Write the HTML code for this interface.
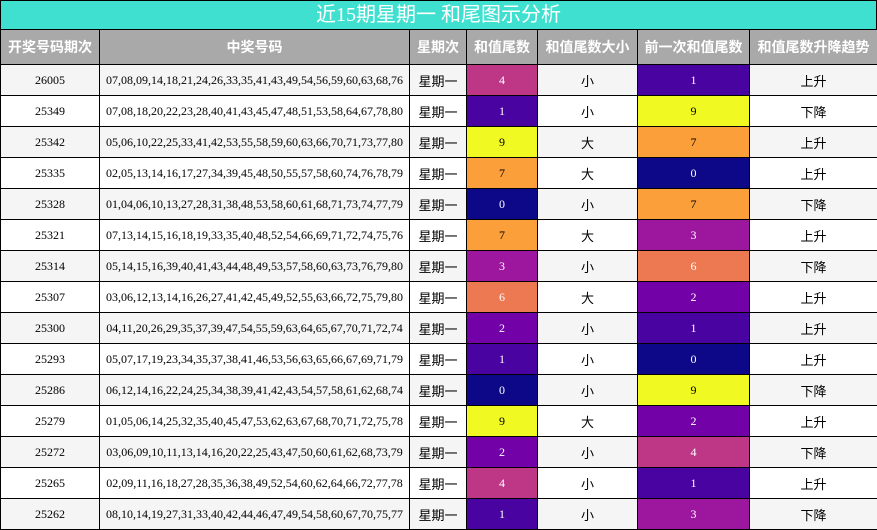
<!DOCTYPE html>
<html><head><meta charset="utf-8"><style>
*{margin:0;padding:0;box-sizing:border-box}
body{width:877px;height:530px;background:#fff;overflow:hidden;font-family:"Liberation Serif","Noto Sans CJK SC",serif}
.title{height:29px;background:#40e0d0;border:1px solid #000;border-bottom:none;color:#fff;text-align:center;font:20px/28px "Liberation Serif","Noto Sans CJK SC",sans-serif}
table{border-collapse:collapse;table-layout:fixed;width:877px}
td,th{border:1px solid #000;text-align:center;font-size:12px;color:#000;height:31px;padding:0;white-space:nowrap;overflow:hidden}
th{background:#a9a9a9;color:#fff;font:bold 14px "Liberation Sans","Noto Sans CJK SC",sans-serif;height:35px}
#b tr:nth-child(odd) td{background:#f5f5f5}
.c{font-family:"Liberation Sans","Noto Sans CJK SC",sans-serif;font-size:13px}
.w{color:#fff}
</style></head><body>
<div class="title">近15期星期一 和尾图示分析</div>
<table>
<colgroup><col style="width:99px"><col style="width:310px"><col style="width:57px"><col style="width:71px"><col style="width:100px"><col style="width:112px"><col style="width:128px"></colgroup>
<thead><tr><th>开奖号码期次</th><th>中奖号码</th><th>星期次</th><th>和值尾数</th><th>和值尾数大小</th><th>前一次和值尾数</th><th>和值尾数升降趋势</th></tr></thead>
<tbody id="b"></tbody>
</table>
<script>
var d=[["26005","07,08,09,14,18,21,24,26,33,35,41,43,49,54,56,59,60,63,68,76",4,"小",1,"上升"],
["25349","07,08,18,20,22,23,28,40,41,43,45,47,48,51,53,58,64,67,78,80",1,"小",9,"下降"],
["25342","05,06,10,22,25,33,41,42,53,55,58,59,60,63,66,70,71,73,77,80",9,"大",7,"上升"],
["25335","02,05,13,14,16,17,27,34,39,45,48,50,55,57,58,60,74,76,78,79",7,"大",0,"上升"],
["25328","01,04,06,10,13,27,28,31,38,48,53,58,60,61,68,71,73,74,77,79",0,"小",7,"下降"],
["25321","07,13,14,15,16,18,19,33,35,40,48,52,54,66,69,71,72,74,75,76",7,"大",3,"上升"],
["25314","05,14,15,16,39,40,41,43,44,48,49,53,57,58,60,63,73,76,79,80",3,"小",6,"下降"],
["25307","03,06,12,13,14,16,26,27,41,42,45,49,52,55,63,66,72,75,79,80",6,"大",2,"上升"],
["25300","04,11,20,26,29,35,37,39,47,54,55,59,63,64,65,67,70,71,72,74",2,"小",1,"上升"],
["25293","05,07,17,19,23,34,35,37,38,41,46,53,56,63,65,66,67,69,71,79",1,"小",0,"上升"],
["25286","06,12,14,16,22,24,25,34,38,39,41,42,43,54,57,58,61,62,68,74",0,"小",9,"下降"],
["25279","01,05,06,14,25,32,35,40,45,47,53,62,63,67,68,70,71,72,75,78",9,"大",2,"上升"],
["25272","03,06,09,10,11,13,14,16,20,22,25,43,47,50,60,61,62,68,73,79",2,"小",4,"下降"],
["25265","02,09,11,16,18,27,28,35,36,38,49,52,54,60,62,64,66,72,77,78",4,"小",1,"上升"],
["25262","08,10,14,19,27,31,33,40,42,44,46,47,49,54,58,60,67,70,75,77",1,"小",3,"下降"]];
var col={0:"#0d0887",1:"#4903a0",2:"#7201a8",3:"#9c179e",4:"#bd3786",5:"#d8576b",6:"#ed7953",7:"#fb9f3a",8:"#fdca26",9:"#f0f921"};
function cell(v){var w=v<=6?' w':'';return '<td class="'+w+'" style="background:'+col[v]+'!important">'+v+'</td>';}
var h="";d.forEach(function(r){h+='<tr><td>'+r[0]+'</td><td>'+r[1]+'</td><td class="c">星期一</td>'+cell(r[2])+'<td class="c">'+r[3]+'</td>'+cell(r[4])+'<td class="c">'+r[5]+'</td></tr>';});
document.getElementById("b").innerHTML=h;
</script>
</body></html>
